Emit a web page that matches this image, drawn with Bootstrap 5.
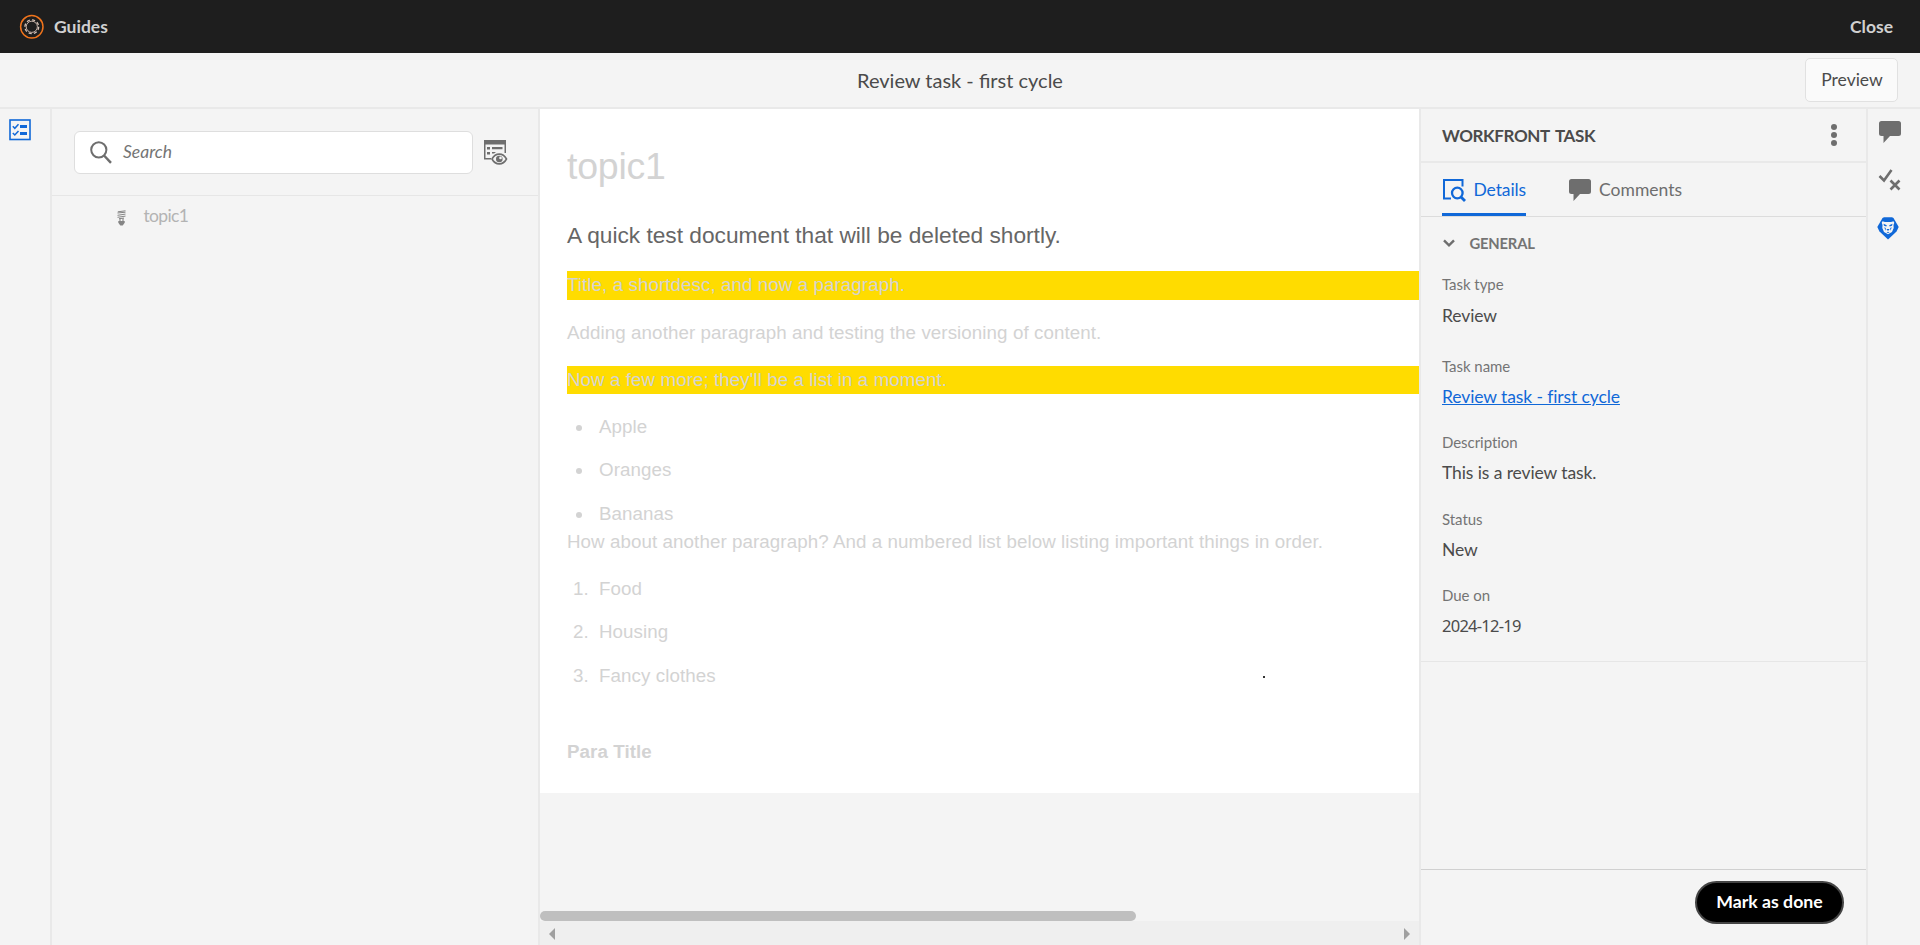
<!DOCTYPE html>
<html lang="en">
<head>
<meta charset="utf-8">
<title>Guides</title>
<link href="https://cdn.jsdelivr.net/npm/bootstrap@5.3.0/dist/css/bootstrap.min.css" rel="stylesheet">
<style>
body{font-family:Lato,"Noto Sans",sans-serif;font-size:17.5px;line-height:24px;color:#4b4b4b;background:#f4f4f4}
svg{display:block;flex:none}
.topbar{height:53px;background:#1e1e1e;color:#d0d0d0;padding:0 27px 0 19px}
.brand-name{margin-left:10px}
.subbar{height:56px;border-bottom:2px solid #e9e9e9;display:grid;grid-template-columns:1fr auto 1fr;padding:0 22px}
.page-title{font-size:20px;padding-bottom:1px}
.btn-preview{width:93px;height:44px;padding:1px 0 0 1px;font-size:17.5px;background:#fafafa;border:1px solid #e1e1e1;border-radius:5px;color:#4b4b4b}
.rail-left{width:52px;border-right:2px solid #e9e9e9;padding:10px 0 0 9px}
.map-panel{width:488px;border-right:2px solid #e9e9e9}
.map-head{height:87px;border-bottom:1px solid #e6e6e6;padding:22px 0 0 22px}
.search-box{width:399px;height:43px;background:#fff;border:1px solid #dedede;border-radius:6px;padding-left:15px;color:#747474}
.search-box em{margin-left:11px;font-size:17.5px;padding-bottom:2px}
.map-item{height:39px;padding-left:65px;color:#b3b3b3}
.map-item span{margin-left:17.5px;letter-spacing:-.65px}
.doc{width:879px}
.doc-page{height:684px;background:#fff;color:#d3d3d3;padding:33px 0 0 27px;font:18.75px/28px "Liberation Sans",Arial,sans-serif;letter-spacing:.075px;position:relative}
.doc-page h1{font-size:37.5px;line-height:48px;margin:0 0 28px;font-weight:400;letter-spacing:-.25px}
.doc-page .shortdesc{font-size:22.7px;line-height:34px;color:#666;margin:0 0 19px;letter-spacing:0}
.doc-page p{margin:0 0 19.5px}
.doc-page .marked{background:#ffdc00}
.doc-page .shortdesc + .marked{height:29px;margin-bottom:18.5px}
.doc-page ol,.doc-page ul{margin:0;padding-left:27px}
.doc-page ul{margin-top:-1px}
.doc-page li{margin-bottom:15.6px;padding-left:5px}
.doc-page ul li:last-child{margin-bottom:0}
.doc-page ol{margin-top:-.5px}
.doc-page ol li:last-child{margin-bottom:48px}
.speck{position:absolute;left:723px;top:567px;width:2px;height:2px;background:#333}
.hbar{height:10px}
.hbar div{width:596px;height:10px;border-radius:5px;background:#bfbfbf}
.arrows{height:24px;background:#efefef;padding:1px 9px 0}
.task-panel{width:449px;border:solid #e9e9e9;border-width:0 2px}
.task-head{height:54px;border-bottom:2px solid #e9e9e9;padding:0 28px 0 21px}
.task-head strong{font-weight:700;font-size:17px;letter-spacing:-.4px;word-spacing:2.5px;padding-top:1px}
.task-tabs{height:54px;border-bottom:1px solid #dcdcdc;padding-left:21px;gap:43px;color:#6e6e6e}
.task-tabs div{height:53px;border-bottom:3px solid transparent;padding-top:3px}
.task-tabs .on{color:#1068d8;border-color:#1068d8}
.task-tabs span{margin-left:8px}
.task-tabs .on span{margin-left:7.5px;letter-spacing:-.1px}
.task-info{height:445px;border-bottom:1px solid #e6e6e6;padding:16px 0 0 21px}
.general{font-size:14.8px;font-weight:700;color:#747474;line-height:20px;margin-bottom:21px;letter-spacing:-.2px}
.general span{margin-left:13.5px}
.lbl{font-size:15px;line-height:20px;color:#747474;margin-bottom:9px;letter-spacing:-.05px}
.val{height:24px;margin-bottom:23.3px;letter-spacing:-.1px}
.val.first{margin:10px 0 28px}
.val a{color:#1068d8}
.val.date{font-family:"Noto Sans",sans-serif;font-size:16.5px;letter-spacing:-.75px}
.task-foot{height:76px;border-top:1px solid #d0d0d0;padding:11px 22px 0 0}
.btn-done{width:149px;height:43px;border:2px solid #444;border-radius:22px;background:#000;color:#fff;font-size:17.7px;font-weight:700;padding:0 0 1px}
.rail-right{width:52px;padding:12px 0 0 9px}
.rail-right svg + svg{margin-top:25px}
</style>
</head>
<body class="vh-100 overflow-hidden d-flex flex-column">
<header class="topbar d-flex align-items-center">
  <svg width="25" height="26" viewBox="0 0 25 26" fill="none"><circle cx="12.8" cy="12.8" r="11.2" stroke="#f0741c" stroke-width="1.5"/><g stroke="#d8c4b8" stroke-width=".9"><circle cx="12.8" cy="12.8" r="5.6"/><circle cx="12.8" cy="12.8" r="6.9" stroke-width="1.3" stroke-dasharray="3.2 2.219"/></g></svg>
  <b class="brand-name">Guides</b>
  <b class="ms-auto">Close</b>
</header>
<div class="subbar align-items-center">
  <span></span><span class="page-title">Review task - first cycle</span>
  <button class="btn btn-preview ms-auto">Preview</button>
</div>
<main class="d-flex flex-grow-1">
  <nav class="rail-left">
    <svg width="22" height="22" viewBox="0 0 22 22" fill="none" stroke="#1068d8"><rect x="1" y="1" width="20" height="19.5" stroke-width="1.6"/><path d="M3.8 7.3l2 2 3.7-4M3.800 14l2 2 3.700-4" stroke-width="1.5"/><path d="M11 7.500h7M11 14.500h7" stroke-width="2.8"/></svg>
  </nav>
  <aside class="map-panel">
    <div class="map-head d-flex">
      <div class="search-box d-flex align-items-center">
        <svg width="22" height="23" viewBox="0 0 22 23" fill="none" stroke="#6e6e6e" stroke-width="2"><circle cx="8.8" cy="8.8" r="7.6"/><path d="M14 14.500l7 7.300" stroke-width="2.5"/></svg>
        <em>Search</em>
      </div>
      <svg class="ms-2 mt-2" width="28" height="28" viewBox="0 0 28 28"><path fill="#6e6e6e" d="M3 1h22v13h-1.500V5.500h-19V19H10v1.500H3z"/><path fill="#6e6e6e" d="M6 8h3v2.500H6zM11 8h10.500v2.300H11zM6 13h3v2.500H6zM11 13h4l-2 1.500h-2z"/><path d="M11 20c3.500-6.500 11-6.500 14.500 0-3.500 6.500-11 6.500-14.500 0z" fill="#f4f4f4" stroke="#6e6e6e" stroke-width="1.6"/><circle cx="18.3" cy="20" r="3.3" fill="#6e6e6e"/><circle cx="19.5" cy="18.9" r="1.3" fill="#f4f4f4"/></svg>
    </div>
    <div class="map-item d-flex align-items-center">
      <svg class="mt-1" width="9" height="16" viewBox="0 0 9 16" fill="none" stroke="#858585"><path stroke-width="1" d="M8.500 .8L.8 1.800M.5 3l8-.8M.5 5.300l8-1.200M.5 7.300l8-1.200M2 8.700l5-.6"/><path stroke-width="1.1" d="M3 8.500v2.500M6 8.500v2.500"/><path d="M1.300 11h6.400v1.800L5.700 15.600H3.300l-2-2.800z" fill="#858585" stroke="none"/></svg>
      <span>topic1</span>
    </div>
  </aside>
  <section class="doc d-flex flex-column">
    <article class="doc-page">
      <h1>topic1</h1>
      <p class="shortdesc">A quick test document that will be deleted shortly.</p>
      <p class="marked">Title, a shortdesc, and now a paragraph.</p>
      <p>Adding another paragraph and testing the versioning of content.</p>
      <p class="marked">Now a few more; they'll be a list in a moment.</p>
      <ul><li>Apple</li><li>Oranges</li><li>Bananas</li></ul>
      <p>How about another paragraph? And a numbered list below listing important things in order.</p>
      <ol><li>Food</li><li>Housing</li><li>Fancy clothes</li></ol>
      <strong>Para Title</strong>
      <span class="speck"></span>
    </article>
    <div class="hbar mt-auto"><div></div></div>
    <div class="arrows d-flex align-items-center justify-content-between">
      <svg width="6" height="12" viewBox="0 0 6 12"><path d="M6 0v12L0 6z" fill="#a0a0a0"/></svg>
      <svg width="6" height="12" viewBox="0 0 6 12"><path d="M0 0v12l6-6z" fill="#a0a0a0"/></svg>
    </div>
  </section>
  <aside class="task-panel d-flex flex-column">
    <div class="task-head d-flex align-items-center justify-content-between">
      <strong>WORKFRONT TASK</strong>
      <svg width="8" height="24" viewBox="0 0 8 24" fill="#6e6e6e"><circle cx="4" cy="4" r="3"/><circle cx="4" cy="12" r="3"/><circle cx="4" cy="20" r="3"/></svg>
    </div>
    <div class="task-tabs d-flex">
      <div class="on d-flex align-items-center">
        <svg width="24" height="24" viewBox="0 0 24 24" fill="none" stroke="#1068d8" stroke-width="2"><path d="M20.500 8.500V2H2v18.500h7"/><circle cx="15.3" cy="15" r="5.3" stroke-width="2.3"/><path d="M19 19l4 4" stroke-width="2.8"/></svg>
        <span>Details</span>
      </div>
      <div class="d-flex align-items-center">
        <svg width="22" height="22" viewBox="0 0 22 22"><path fill="#6e6e6e" d="M2.500 0h17A2.500 2.500 0 0 1 22 2.500v10a2.500 2.500 0 0 1-2.500 2.500H11l-6.500 7V15h-2A2.500 2.500 0 0 1 0 12.500v-10A2.500 2.500 0 0 1 2.500 0z"/></svg>
        <span>Comments</span>
      </div>
    </div>
    <div class="task-info">
      <div class="general d-flex align-items-center"><svg width="14" height="8" viewBox="0 0 14 8" fill="none" stroke="#6e6e6e" stroke-width="2.4"><path d="M2 1.300l5 5 5-5"/></svg><span>GENERAL</span></div>
      <div class="lbl">Task type</div><div class="val first">Review</div>
      <div class="lbl">Task name</div><div class="val"><a href="#">Review task - first cycle</a></div>
      <div class="lbl">Description</div><div class="val">This is a review task.</div>
      <div class="lbl">Status</div><div class="val">New</div>
      <div class="lbl">Due on</div><div class="val date">2024-12-19</div>
    </div>
    <div class="task-foot mt-auto d-flex justify-content-end"><button class="btn btn-done">Mark as done</button></div>
  </aside>
  <nav class="rail-right">
    <svg width="26" height="22" viewBox="0 0 26 22"><path fill="#6e6e6e" d="M4.500 0h17A2.500 2.500 0 0 1 24 2.500v10a2.500 2.500 0 0 1-2.500 2.500H13l-6.500 7V15h-2A2.500 2.500 0 0 1 2 12.500v-10A2.500 2.500 0 0 1 4.500 0z"/></svg>
    <svg width="26" height="24" viewBox="0 0 26 24" fill="none" stroke="#6e6e6e" stroke-width="2.6"><path d="M2.500 8l4.500 4.500L14.500 2M13.500 12.500l9 9M22.500 12.500l-9 9"/></svg>
    <svg width="22" height="23" viewBox="0 0 22 23"><path fill="#1068d8" d="M5.500 1L7 .3h8l1.500.7 5.200 9-2.200 4.500L11 22.500 2.500 14.500.3 10z"/><path fill="#f4f4f4" d="M5.500 4.200L8 5h6l2.500-.8.8 1.500-.8 2.300.2 3-1.700 4L11 17.300 7 15l-1.700-4 .2-3-.8-2.300z"/><path fill="#1068d8" d="M6.500 6.800L9.800 8.300 9.300 9.600 7 8.700zM15.500 6.800L12.200 8.300l.5 1.300L15 8.700zM7.300 10.200l1.500.8-.3 2.800zM14.700 10.200l-1.500.8.3 2.800zM9.400 12h3.200L11 14zM9.500 15.400l1.500-.7 1.500.7-1.500.5z"/></svg>
  </nav>
</main>
<script src="https://cdn.jsdelivr.net/npm/bootstrap@5.3.0/dist/js/bootstrap.bundle.min.js"></script>
</body>
</html>
